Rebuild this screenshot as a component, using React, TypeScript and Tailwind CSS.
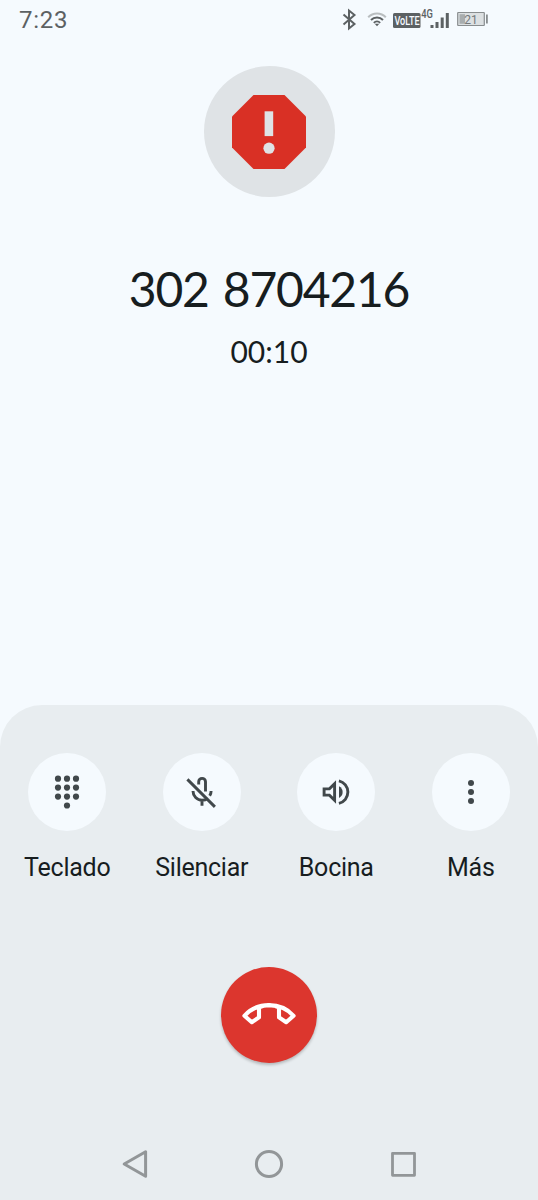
import type { ReactNode } from "react";

function StatusBar() {
  return (
    <header className="flex h-10 items-center justify-between pl-[19px] pr-[50px] text-[#5c6163]">
      <span className="text-[24px] leading-[41px] tracking-[0.7px] font-['Roboto',sans-serif]">7:23</span>
      <svg width="148" height="40" viewBox="0 0 148 40" fill="none">
        {/* bluetooth */}
        <path d="M3.5 14.5l11 9.5-5.5 4.5V10.5l5.5 4.5-11 9.5" stroke="#5c6163" strokeWidth="2" />
        {/* wifi */}
        <path d="M28.2 17.3a12 12 0 0 1 17.6 0" stroke="#b9bec0" strokeWidth="2" />
        <path d="M31 20a8.4 8.4 0 0 1 12 0" stroke="#5c6163" strokeWidth="2" />
        <path d="M33.8 22.8a4.6 4.6 0 0 1 6.4 0" stroke="#5c6163" strokeWidth="1.8" />
        <path d="M34.7 23.8h4.6L37 26.2z" fill="#5c6163" />
        <rect x="53" y="13" width="27.5" height="15" rx="1.5" fill="#5c6163" />
        <text transform="translate(54.4 25.2) scale(0.7 1)" fontSize="13" fontWeight="500" fill="#f5faff" fontFamily="Roboto, sans-serif">VoLTE</text>
        <text transform="translate(81.3 18.2) scale(0.78 1)" fontSize="12" fontWeight="500" fill="#5c6163" fontFamily="Roboto, sans-serif">4G</text>
        {/* signal */}
        <path d="M92 28v-3M97 28v-6M102.2 28V17.5M107.3 28V13" stroke="#5c6163" strokeWidth="3" />
        {/* battery */}
        <rect x="117.7" y="12.5" width="26.6" height="13" rx="0.5" fill="#dce0e2" stroke="#888d8f" strokeWidth="1.2" />
        <rect x="119.5" y="14.2" width="5.5" height="9.6" fill="#a8adaf" />
        <rect x="146" y="14.5" width="1.8" height="9" fill="#888d8f" />
        <text x="131" y="23.7" textAnchor="middle" fontSize="12" fill="#74797b" fontFamily="Roboto, sans-serif">21</text>
      </svg>
    </header>
  );
}

function SpamIcon() {
  return (
    <svg width="74" height="74" viewBox="0 0 74 74">
      <path d="M21.5 0h31L74 21.5v31L52.5 74h-31L0 52.5v-31z" fill="#d93025" />
      <path d="M32.6 16.3h8.6v24.8h-8.6z" fill="#dfe3e6" />
      <circle cx="37" cy="53.2" r="5.6" fill="#dfe3e6" />
    </svg>
  );
}

function KeypadIcon() {
  return (
    <svg width="36" height="36" viewBox="0 0 36 36" fill="#41484b">
      {[4.7, 13.6, 22.6].map((y) => (
        <g key={y}>
          <circle cx="9" cy={y} r="3.1" />
          <circle cx="18" cy={y} r="3.1" />
          <circle cx="27" cy={y} r="3.1" />
        </g>
      ))}
      <circle cx="18" cy="31.5" r="3.1" />
    </svg>
  );
}

function MicOffIcon() {
  return (
    <svg width="36" height="36" viewBox="0 0 36 36" fill="none" stroke="#41484b" strokeWidth="2.9">
      <path d="M3.4 5.4l27.5 27.5" />
      <path d="M14.7 10.6V7.8a3.4 3.4 0 0 1 6.8 0v9.6" />
      <path d="M9 17c0 5.2 4 9.2 9 9.2 2.4 0 4.3-.7 5.8-1.9M18 26v5.8M27.1 17c0 1.8-.5 3.4-1.4 4.8" />
    </svg>
  );
}

function SpeakerIcon() {
  return (
    <svg width="36" height="36" viewBox="0 0 36 36" fill="none" stroke="#41484b" strokeWidth="2.9">
      <path d="M6.1 14.9h5.3l5.2-5.1v16.4l-5.2-5.1H6.1z" />
      <path d="M20.9 6.8a11.6 11.6 0 0 1 0 22.6" />
      <path d="M21 12.2a6.6 6.6 0 0 1 0 11.8z" fill="#41484b" stroke="none" />
    </svg>
  );
}

function MoreIcon() {
  return (
    <svg width="36" height="36" viewBox="0 0 36 36" fill="#41484b">
      <circle cx="18" cy="9" r="3" />
      <circle cx="18" cy="18" r="3" />
      <circle cx="18" cy="27" r="3" />
    </svg>
  );
}

function CallAction({ label, children }: { label: ReactNode; children: ReactNode }) {
  return (
    <div className="flex flex-col items-center">
      <button className="flex size-[78px] items-center justify-center rounded-full bg-[#f5fafe]">{children}</button>
      <span className="mt-[21px] text-[25px] leading-8 tracking-[-0.25px] text-[#171d1f] font-['Roboto',sans-serif]">{label}</span>
    </div>
  );
}

function NavBar() {
  return (
    <nav className="grid h-[72px] grid-cols-[201px_136px_201px] items-center">
      <button className="flex justify-end pr-[52px]">
        <svg width="28" height="32" viewBox="0 0 28 32" fill="none" stroke="#929698" strokeWidth="3" strokeLinejoin="round">
          <path d="M3.2 16L24.6 3.7v24.6z" />
        </svg>
      </button>
      <button className="flex justify-center">
        <svg width="32" height="32" viewBox="0 0 32 32" fill="none" stroke="#929698" strokeWidth="3">
          <circle cx="16" cy="16" r="12.6" />
        </svg>
      </button>
      <button className="flex pl-[50px]">
        <svg width="32" height="32" viewBox="0 0 32 32" fill="none" stroke="#929698" strokeWidth="2.8" strokeLinejoin="round">
          <rect x="5.5" y="5.3" width="22" height="22" />
        </svg>
      </button>
    </nav>
  );
}

export default function App() {
  return (
    <div className="flex h-[1200px] w-[538px] flex-col overflow-hidden bg-[#f5fafe]">
      <StatusBar />

      <main className="flex flex-1 flex-col items-center pt-[26px] text-[#171d1f] font-['Lato',sans-serif]">
        <div className="flex size-[131px] items-center justify-center rounded-full bg-[#dfe3e6]">
          <SpamIcon />
        </div>
        <h1 className="mt-[62px] text-[48px] leading-[60px] tracking-[-1.2px] [word-spacing:3px]">302 8704216</h1>
        <p className="mt-3 text-[30px] leading-10">00:10</p>
      </main>

      <section className="flex h-[495px] flex-col rounded-t-[42px] bg-[#e8edf0] pt-12">
        <div className="grid grid-cols-4">
          <CallAction label="Teclado">
            <KeypadIcon />
          </CallAction>
          <CallAction label="Silenciar">
            <MicOffIcon />
          </CallAction>
          <CallAction label="Bocina">
            <SpeakerIcon />
          </CallAction>
          <CallAction label="Más">
            <MoreIcon />
          </CallAction>
        </div>

        <button className="mx-auto mt-[83px] flex size-24 items-center justify-center rounded-full bg-[#dc362e] shadow-[0_2px_3px_rgba(0,0,0,0.22)]">
          <svg width="60" height="60" viewBox="0 0 60 60" fill="none" stroke="#fff" strokeWidth="4.1" strokeLinejoin="round">
            <path d="M5.4 30.8C11.6 23.8 20 20.1 30 20.1s18.4 3.7 24.6 10.7l-7.4 6.4-7.2-4.8v-10C37 20.7 33.5 20.1 30 20.1s-6.8.6-10 2.3v10l-7.2 4.8z" />
          </svg>
        </button>

        <div className="mt-auto">
          <NavBar />
        </div>
      </section>
    </div>
  );
}
